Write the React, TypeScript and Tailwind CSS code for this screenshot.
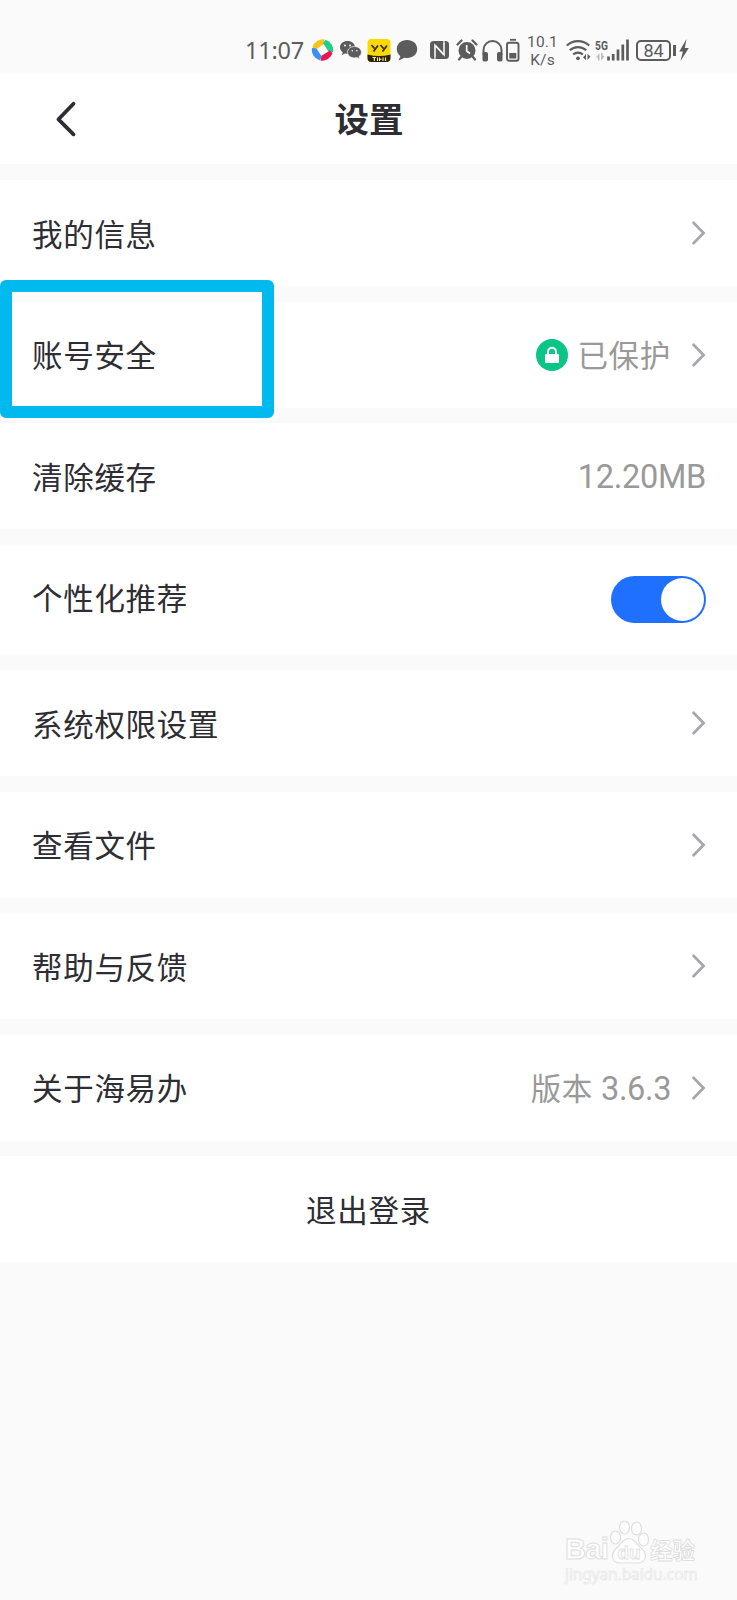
import type { ReactNode } from "react";

type Row = {
  label: string;
  value?: ReactNode;
  arrow?: boolean;
  toggle?: boolean;
  highlighted?: boolean;
};

const LockBadge = () => (
  <svg width="32" height="32" viewBox="0 0 32 32" className="mr-[9px]">
    <circle cx="16" cy="16" r="16" fill="#0bc587" />
    <path d="M12 16v-3.2a4 4 0 0 1 8 0V16" fill="none" stroke="#fff" strokeWidth="2" />
    <rect x="9" y="15" width="14" height="9" rx="1" fill="#fff" />
  </svg>
);

const rows: Row[] = [
  { label: "我的信息", arrow: true },
  {
    label: "账号安全",
    arrow: true,
    highlighted: true,
    value: (
      <>
        <LockBadge />
        <span className="tracking-[0.7px]">已保护</span>
      </>
    ),
  },
  {
    label: "清除缓存",
    value: (
      <span className="pt-[2px] font-['Roboto',sans-serif] text-[32.5px] tracking-[-0.3px]">
        12.20MB
      </span>
    ),
  },
  { label: "个性化推荐", toggle: true },
  { label: "系统权限设置", arrow: true },
  { label: "查看文件", arrow: true },
  { label: "帮助与反馈", arrow: true },
  {
    label: "关于海易办",
    arrow: true,
    value: (
      <>
        <span className="mr-[8px] tracking-[0.7px]">版本</span>
        <span className="pt-[3px] font-['Roboto',sans-serif] text-[32.5px] tracking-[-0.4px]">
          3.6.3
        </span>
      </>
    ),
  },
];

const ArrowRight = () => (
  <svg width="15" height="26" viewBox="0 0 15 26" className="ml-[20px]">
    <path
      d="M2.5 2.8 12.6 13 2.5 23.2"
      fill="none"
      stroke="#a6a7ac"
      strokeWidth="2.7"
      strokeLinecap="round"
    />
  </svg>
);

const Toggle = () => (
  <button className="flex h-[47px] w-[95px] items-center justify-end rounded-full bg-[#1f70ff] pr-[2px]">
    <span className="size-[43px] rounded-full bg-white" />
  </button>
);

const StatusBar = () => (
  <div className="flex h-[73px] items-start pl-[245px] pt-[38px] text-[#5c5c5c]">
    <span className="w-[66px] font-['Noto_Sans',sans-serif] text-[23.5px] leading-6 tracking-[-0.2px]">
      11:07
    </span>

    {/* pinwheel */}
    <svg width="23" height="24" viewBox="0 0 23 24">
      <path d="M1.5 9A10.800 10.800 0 0 1 13.500 1.500L13 6 4 12Z" fill="#f6c51d" />
      <path d="M14.500 1.700A10.800 10.800 0 0 1 22 14L17.500 13.500 12 5Z" fill="#20ce8a" />
      <path d="M21.500 15A10.800 10.800 0 0 1 9.500 22.500L10 18 19 12.500Z" fill="#ef1450" />
      <path d="M8.500 22.300A10.800 10.800 0 0 1 1 10L5.500 10.500 11 19Z" fill="#3990f5" />
    </svg>

    {/* chat */}
    <svg width="23" height="24" viewBox="0 0 23 24" className="ml-[5px]">
      <path
        d="M8.5 3C4.2 3 1 5.7 1 9.3c0 2 1 3.7 2.7 4.9L3 17l3-1.6c1 .3 1.7.3 2.5.3 4.3 0 7.5-2.7 7.5-6.4S12.8 3 8.5 3Z"
        fill="currentColor"
      />
      <path
        d="M15.5 8.5c-3.9 0-7 2.5-7 5.7s3.1 5.7 7 5.7c.9 0 1.7-.1 2.5-.3l2.7 1.4-.7-2.4c1.5-1 2.4-2.6 2.4-4.4 0-3.2-3-5.7-6.9-5.7Z"
        fill="currentColor"
        stroke="#fafafa"
        strokeWidth=".7"
      />
      <g fill="#fafafa">
        <circle cx="6" cy="7.5" r="1" />
        <circle cx="11" cy="7.5" r="1" />
        <circle cx="13.3" cy="12.7" r=".8" />
        <circle cx="17.8" cy="12.7" r=".8" />
      </g>
    </svg>

    {/* yellow app badge */}
    <svg width="24" height="24" viewBox="0 0 24 24" className="ml-[5px]">
      <rect x=".5" y="1" width="23" height="23" rx="4" fill="#fbd900" />
      <path d="M.5 16.5q11.5 3 23 0V20a4 4 0 0 1-4 4h-15a4 4 0 0 1-4-4Z" fill="#2b230b" />
      <path
        d="m4.5 7 3 3.500M11 7.500l-4.500 6M13.500 7l3 3.500M20 7.500l-4.500 6"
        fill="none"
        stroke="#3b2e04"
        strokeWidth="1.8"
      />
      <path d="M5.500 19.500H9m-1.700 0V23M10.500 19.500V23m2-3.500V23m0-1.800h2M16 19.500V23m2.500-3.500V23" stroke="#fff0b0" strokeWidth="1.1" />
    </svg>

    {/* message bubble */}
    <svg width="22" height="24" viewBox="0 0 22 24" className="ml-[5px]">
      <path
        d="M11 2C5 2 .8 5.8.8 11c0 3 1.4 5.5 3.6 7.2L2.500 22.500 8.500 19.800c.8.2 1.600.2 2.500.2 6 0 10.200-3.800 10.200-9S17 2 11 2Z"
        fill="currentColor"
      />
    </svg>

    {/* nfc */}
    <svg width="19" height="24" viewBox="0 0 19 24" className="ml-[12px]">
      <rect y="3" width="19" height="18" rx="3.5" fill="currentColor" />
      <path d="M5 18.500V7.200l8.500 9.300M14 5v11.800L5.500 7.500" fill="none" stroke="#fafafa" strokeWidth="1.6" />
      <path d="M5 18v3M14 3v3" stroke="#fafafa" strokeWidth="1.2" />
    </svg>

    {/* alarm */}
    <svg width="22" height="24" viewBox="0 0 22 24" className="ml-[7px]">
      <circle cx="11" cy="12.5" r="8.5" fill="currentColor" />
      <path d="m1.500 6.500 4-4M16.500 2.500l4 4M5 19l-2 2.500M17 19l2 2.500" stroke="currentColor" strokeWidth="2.2" strokeLinecap="round" />
      <path d="M10.700 7v6l3.300 2.500" fill="none" stroke="#fafafa" strokeWidth="1.7" />
    </svg>

    {/* headphones */}
    <svg width="21" height="24" viewBox="0 0 21 24" className="ml-[4px]">
      <path d="M1.500 17v-5a9 9 0 0 1 18 0v5" fill="none" stroke="currentColor" strokeWidth="2" />
      <rect x=".5" y="14" width="5.5" height="9.5" rx="2" fill="currentColor" />
      <rect x="15" y="14" width="5.5" height="9.5" rx="2" fill="currentColor" />
    </svg>

    {/* device battery */}
    <svg width="14" height="24" viewBox="0 0 14 24" className="ml-[3px]">
      <path d="M4 1.800h6" stroke="currentColor" strokeWidth="1.8" />
      <rect x="1" y="4.7" width="11.5" height="18" rx="2" fill="none" stroke="currentColor" strokeWidth="1.9" />
      <rect x="3.3" y="15" width="7" height="5.5" fill="currentColor" />
    </svg>

    <span className="-mt-[5px] ml-[5px] flex w-[35px] flex-col text-center font-['Roboto',sans-serif] text-[15.5px] leading-[18px] tracking-[0.2px]">
      <span>10.1</span>
      <span>K/s</span>
    </span>

    {/* wifi */}
    <svg width="25" height="24" viewBox="0 0 25 24" className="ml-[6px]">
      <g fill="none" stroke="currentColor" strokeWidth="2.2">
        <path d="M.8 7.500a16.500 16.500 0 0 1 22.400 0" />
        <path d="M3.800 12.300a12 12 0 0 1 16.400 0" />
        <path d="M7.200 16.500a7 7 0 0 1 9.600 0" />
      </g>
      <circle cx="12" cy="20.3" r="1.9" fill="currentColor" />
      <path d="M20 22v-6l-3 3.500ZM21.500 16v6l3-3.500Z" fill="currentColor" />
    </svg>

    {/* cell signal */}
    <span className="ml-[4px] flex w-[11px] flex-col">
      <span className="origin-left scale-x-[0.76] font-['Roboto',sans-serif] text-[13.5px] font-bold leading-[14px]">
        5G
      </span>
      <svg width="10" height="8" viewBox="0 0 10 8" className="mt-px text-[#bdbdbd]">
        <path d="M4.500 7.500V0L.8 4.500h2v3ZM6 0v7.500L9.700 3h-2V0Z" fill="currentColor" />
      </svg>
    </span>
    <svg width="22" height="24" viewBox="0 0 22 24" className="ml-px">
      <path
        d="M1.500 22.500v-4M6.200 22.500v-6.500M11 22.500V11.500M15.800 22.500V6.500M20.500 22.500V1.500"
        stroke="currentColor"
        strokeWidth="2.7"
      />
    </svg>

    {/* battery level */}
    <span className="ml-[7px] mt-[2px] flex h-[21px] w-[35px] items-center justify-center rounded-[5px] border-2 border-current font-['Roboto',sans-serif] text-[18px] leading-none">
      84
    </span>
    <span className="ml-[2px] mt-[7px] h-[11px] w-[3px] bg-current" />
    <svg width="10" height="24" viewBox="0 0 10 24" className="ml-[3px]">
      <path d="M7.500 1 .3 13.500h3.600L1.500 23 9.800 10H5.800Z" fill="currentColor" />
    </svg>
  </div>
);

const Watermark = () => (
  <div className="ml-[565px] mt-[256px] w-[134px] text-white">
    <div className="flex h-[46px] items-end">
      <span className="w-[44px] font-['Liberation_Sans',sans-serif] text-[29px] font-bold leading-[29px] tracking-[-0.6px] [-webkit-text-stroke:1px_#dedede]">
        Bai
      </span>
      <svg width="40" height="45" viewBox="0 0 40 45" fill="#fdfdfd" stroke="#dfdfdf" strokeWidth="1.2">
        <ellipse cx="6.5" cy="18.5" rx="5" ry="6.5" />
        <ellipse cx="15.5" cy="8.5" rx="5" ry="6.5" />
        <ellipse cx="27.5" cy="9.5" rx="5" ry="6.5" />
        <ellipse cx="34.5" cy="20.5" rx="5" ry="6.5" />
        <path d="M20 19.500c-5 0-7 4-10 7S3.500 32 3.500 37c0 4.500 3.500 7 8 7h17c4.500 0 8-2.500 8-7 0-5-4-7.500-7-10.500s-4.500-7-9.500-7Z" />
        <text
          x="20"
          y="40"
          textAnchor="middle"
          fontFamily="Liberation Sans"
          fontSize="19"
          fontWeight="700"
          strokeWidth=".8"
        >
          du
        </text>
      </svg>
      <span className="ml-px whitespace-nowrap font-['Noto_Sans_CJK_SC',sans-serif] text-[22.5px] font-bold leading-[30px] [-webkit-text-stroke:0.8px_#dcdcdc]">
        经验
      </span>
    </div>
    <p className="whitespace-nowrap font-['Noto_Sans',sans-serif] text-[15.5px] leading-5 tracking-[-0.1px] [-webkit-text-stroke:0.6px_#e3e3e3]">
      jingyan.baidu.com
    </p>
  </div>
);

const App = () => {
  return (
    <main className="h-[1600px] w-[737px] overflow-hidden bg-[#fafafa] font-['Noto_Sans_CJK_SC',sans-serif] text-[#2d2d33]">
      <StatusBar />

      <header className="grid h-[91px] grid-cols-3 items-center bg-white">
        <svg width="22" height="36" viewBox="0 0 22 36" className="ml-[55px]">
          <path
            d="M18.500 2.800 3.500 18.300l15 15"
            fill="none"
            stroke="currentColor"
            strokeWidth="3.8"
            strokeLinecap="round"
            strokeLinejoin="round"
          />
        </svg>
        <h1 className="pb-[2px] pl-px text-center text-[34.5px] font-bold leading-none">设置</h1>
      </header>

      <ul className="mt-[16px] flex flex-col gap-[15.5px]">
        {rows.map((row) => (
          <li
            key={row.label}
            className={`relative flex items-center justify-between bg-white pl-8 pr-[31px] text-[30.5px] leading-none ${
              row.toggle ? "h-[110px]" : "h-[106px]"
            }`}
          >
            <span className={row.toggle ? "pb-[4px] tracking-[0.7px]" : "tracking-[0.7px]"}>
              {row.label}
            </span>
            <div className="flex items-center text-[#999]">
              {row.value}
              {row.arrow && <ArrowRight />}
              {row.toggle && <Toggle />}
            </div>
            {row.highlighted && (
              <div className="absolute -top-[22px] left-0 z-10 h-[138px] w-[274px] rounded-[6px] border-[12px] border-[#00b9ef]" />
            )}
          </li>
        ))}
        <li className="flex h-[106px] items-center justify-center bg-white text-[30.5px] leading-none tracking-[0.7px]">
          退出登录
        </li>
      </ul>

      <Watermark />
    </main>
  );
};

export default App;
